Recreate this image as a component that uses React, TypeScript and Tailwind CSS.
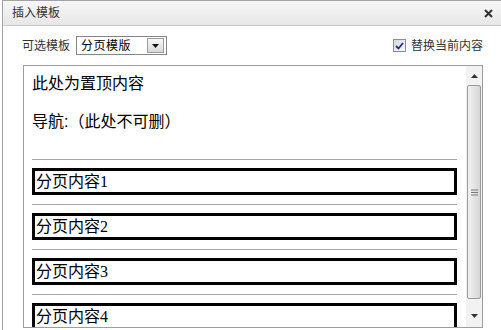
import React from "react";

const UI_FONT = "font-['Liberation_Sans','Noto_Sans_CJK_SC',sans-serif]";
const PAGES = ["分页内容1", "分页内容2", "分页内容3", "分页内容4"];

export default function App() {
  return (
    <div className={`w-[501px] h-[330px] overflow-hidden bg-white pl-[2px] ${UI_FONT}`}>
      <div className="flex h-full flex-col border-l border-t border-[#a3a3a3]">
        {/* Title bar */}
        <div className="flex h-[25px] shrink-0 items-center justify-between border-b border-[#cacaca] bg-gradient-to-b from-[#f7f7f7] to-[#e7e7e7] pl-[9px] pr-[8px]">
          <span className="text-[12px] leading-none text-[#333]">插入模板</span>
          <svg width="9" height="9" viewBox="0 0 9 9" aria-hidden="true">
            <path d="M1 1 L8 8 M8 1 L1 8" stroke="#333" strokeWidth="2" />
          </svg>
        </div>

        {/* Toolbar */}
        <div className="flex h-[39px] shrink-0 items-center justify-between pl-[19px] pr-[18px] text-[12px] text-[#333]">
          <div className="flex items-center gap-[6px]">
            <span>可选模板</span>
            <div className="flex h-[19px] w-[91px] items-center justify-between border border-[#858585] bg-white pl-[4px] pr-[2px]">
              <span className="tracking-[0.5px] text-black">分页模版</span>
              <span className="flex h-[15px] w-[17px] items-center justify-center border border-[#9c9c9c] bg-gradient-to-b from-[#f8f8f8] to-[#d9d9d9]">
                <svg width="7" height="4" viewBox="0 0 7 4" aria-hidden="true">
                  <path d="M0 0 L7 0 L3.5 4 Z" fill="#111" />
                </svg>
              </span>
            </div>
          </div>
          <label className="flex items-center gap-[5px]">
            <span className="flex h-[13px] w-[13px] items-center justify-center border border-[#8e8f8f] bg-gradient-to-br from-[#d6d9df] to-[#f7f8fa]">
              <svg width="9" height="8" viewBox="0 0 9 8" aria-hidden="true">
                <path d="M1 4 L3.5 6.5 L8 1" stroke="#22307a" strokeWidth="1.8" fill="none" />
              </svg>
            </span>
            <span>替换当前内容</span>
          </label>
        </div>

        {/* Editor area */}
        <div className="ml-[20px] flex h-[263px] w-[460px] shrink-0 overflow-hidden border border-[#9d9d9d] bg-white">
          <div className="flex-1 overflow-hidden pl-[8px] pr-[9px] pt-[6px] text-[16px] leading-[24px] text-black">
            <p>此处为置顶内容</p>
            <p className="mt-[14px]">导航:（此处不可删）</p>
            <div className="mt-[25px] h-px bg-[#a6a6a6]" />
            {PAGES.map((t, i) => (
              <div key={t}>
                {i > 0 && <div className="mt-[9px] h-px bg-[#a6a6a6]" />}
                <div className="mt-[8px] flex h-[27px] items-center border-[3px] border-black pl-[1px] font-['Liberation_Serif','Noto_Sans_CJK_SC',serif] leading-none">
                  {t}
                </div>
              </div>
            ))}
          </div>

          {/* Scrollbar */}
          <div className="flex w-[16px] shrink-0 flex-col bg-[#f2f2f2]">
            <div className="flex h-[19px] items-center justify-center">
              <svg width="7" height="4" viewBox="0 0 7 4" aria-hidden="true">
                <path d="M0 4 L7 4 L3.5 0 Z" fill="#333" />
              </svg>
            </div>
            <div className="mx-[1px] flex h-[214px] items-center justify-center rounded-[2px] border border-[#9b9b9b] bg-gradient-to-r from-[#f2f2f2] to-[#d6d6d6]">
              <svg width="7" height="7" viewBox="0 0 7 7" aria-hidden="true">
                <path d="M0 1 H7 M0 3.5 H7 M0 6 H7" stroke="#7a7a7a" strokeWidth="1" />
              </svg>
            </div>
            <div className="flex flex-1 items-center justify-center pt-[6px]">
              <svg width="7" height="4" viewBox="0 0 7 4" aria-hidden="true">
                <path d="M0 0 L7 0 L3.5 4 Z" fill="#333" />
              </svg>
            </div>
          </div>
        </div>
      </div>
    </div>
  );
}
